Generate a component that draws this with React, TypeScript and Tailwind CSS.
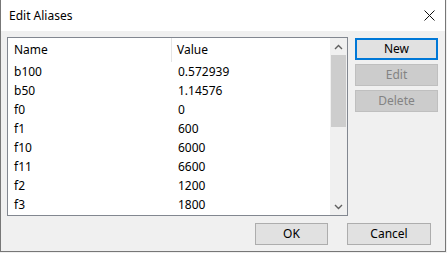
import React from "react";

const rows: [string, string][] = [
  ["b100", "0.572939"],
  ["b50", "1.14576"],
  ["f0", "0"],
  ["f1", "600"],
  ["f10", "6000"],
  ["f11", "6600"],
  ["f2", "1200"],
  ["f3", "1800"],
];

function Chevron({ down }: { down?: boolean }) {
  return (
    <svg width="9" height="6" viewBox="0 0 9 6" className={down ? "rotate-180" : ""}>
      <path d="M1 5 L4.5 1.5 L8 5" fill="none" stroke="#606060" strokeWidth="1.4" />
    </svg>
  );
}

export default function App() {
  return (
    <div
      className="w-[447px] h-[253px] bg-[#f0f0f0] overflow-hidden text-[12px] text-black"
      style={{ fontFamily: '"Noto Sans", "Liberation Sans", sans-serif' }}
    >
      <div className="w-[446px] h-[252px] flex flex-col border-x border-b border-[#777777]">
        {/* Title bar */}
        <div className="h-[31px] bg-white flex items-center justify-between pl-[8px] pr-[10px] shrink-0">
          <span className="text-[12px] leading-none">Edit Aliases</span>
          <svg width="11" height="11" viewBox="0 0 11 11">
            <path d="M0.5 0.5 L10.5 10.5 M10.5 0.5 L0.5 10.5" stroke="#111" strokeWidth="1" />
          </svg>
        </div>

        {/* Body */}
        <div className="flex-1 flex flex-col pl-[6px] pt-[6px]">
          <div className="flex">
            {/* List view */}
            <div className="w-[341px] h-[179px] border border-[#828790] bg-white flex">
              <div className="flex-1 flex flex-col">
                <div className="h-[24px] flex items-center shrink-0">
                  <div className="w-[164px] h-full flex items-center pl-[6px] border-r border-[#e5e5e5]">Name</div>
                  <div className="pl-[5px]">Value</div>
                </div>
                {rows.map(([n, v]) => (
                  <div key={n} className="h-[19px] flex items-center">
                    <div className="w-[164px] pl-[6px]">{n}</div>
                    <div className="pl-[6px]">{v}</div>
                  </div>
                ))}
              </div>
              {/* Scrollbar */}
              <div className="w-[17px] bg-[#f0f0f0] flex flex-col">
                <div className="h-[17px] flex items-center justify-center">
                  <Chevron />
                </div>
                <div className="flex-1 flex flex-col">
                  <div className="h-[72px] mx-[1px] bg-[#cdcdcd]" />
                </div>
                <div className="h-[17px] flex items-center justify-center">
                  <Chevron down />
                </div>
              </div>
            </div>

            {/* Side buttons */}
            <div className="ml-[7px] mt-[1px] flex flex-col gap-[4px]">
              <div className="w-[83px] h-[22px] border-2 border-[#0078d7] bg-[#e1e1e1] flex items-center justify-center">
                New
              </div>
              <div className="w-[83px] h-[22px] border border-[#bfbfbf] bg-[#cccccc] text-[#838383] flex items-center justify-center">
                Edit
              </div>
              <div className="w-[83px] h-[22px] border border-[#bfbfbf] bg-[#cccccc] text-[#838383] flex items-center justify-center">
                Delete
              </div>
            </div>
          </div>

          {/* Bottom buttons */}
          <div className="flex justify-end gap-[19px] mt-[7px] pr-[14px]">
            <div className="w-[73px] h-[22px] border border-[#adadad] bg-[#e1e1e1] flex items-center justify-center">OK</div>
            <div className="w-[84px] h-[22px] border border-[#adadad] bg-[#e1e1e1] flex items-center justify-center">Cancel</div>
          </div>
        </div>
      </div>
    </div>
  );
}
